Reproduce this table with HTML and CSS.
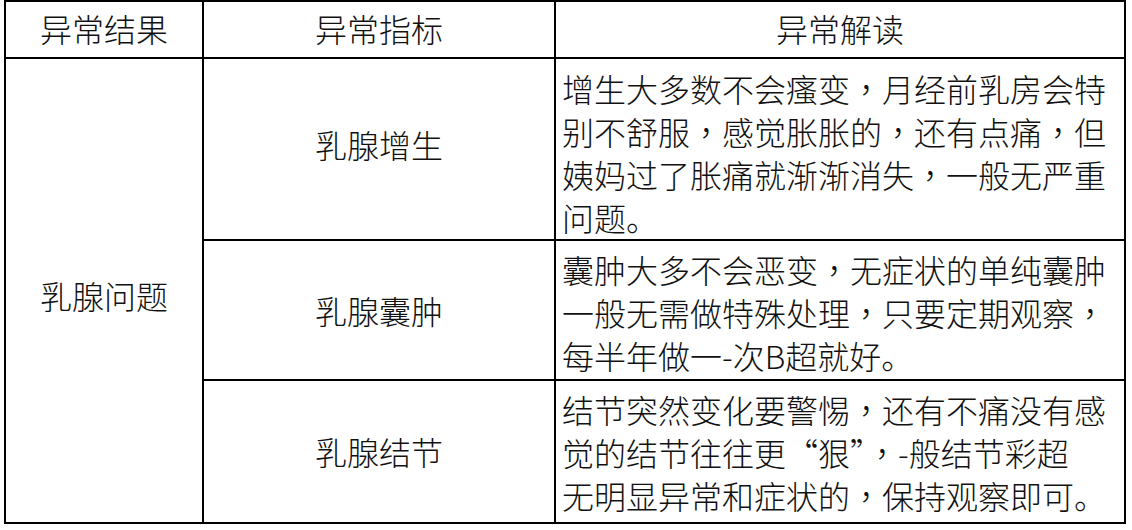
FILE: index.html
```html
<!DOCTYPE html>
<html lang="zh-CN">
<head>
<meta charset="utf-8">
<title>乳腺异常</title>
<link rel="stylesheet" href="styles.css">
</head>
<body>
<div class="sheet">
  <div class="cell head">异常结果</div>
  <div class="cell head">异常指标</div>
  <div class="cell head">异常解读</div>

  <div class="cell group">乳腺问题</div>

  <div class="cell name first">乳腺增生</div>
  <div class="cell note first"><p class="lines">增生大多数不会瘙变<span class="pc" lang="zh-TW">，</span>月经前乳房会特<br>别不舒服<span class="pc" lang="zh-TW">，</span>感觉胀胀的<span class="pc" lang="zh-TW">，</span>还有点痛<span class="pc" lang="zh-TW">，</span>但<br>姨妈过了胀痛就渐渐消失<span class="pc" lang="zh-TW">，</span>一般无严重<br>问题。</p></div>

  <div class="cell name">乳腺囊肿</div>
  <div class="cell note mid"><p class="lines">囊肿大多不会恶变<span class="pc" lang="zh-TW">，</span>无症状的单纯囊肿<br>一般无需做特殊处理<span class="pc" lang="zh-TW">，</span>只要定期观察<span class="pc" lang="zh-TW">，</span><br>每半年做一-次B超就好。</p></div>

  <div class="cell name">乳腺结节</div>
  <div class="cell note last"><p class="lines">结节突然变化要警惕<span class="pc" lang="zh-TW">，</span>还有不痛没有感<br>觉的结节往往更“狠”<span class="pc" lang="zh-TW">，</span>-般结节彩超<br>无明显异常和症状的<span class="pc" lang="zh-TW">，</span>保持观察即可。</p></div>
</div>
</body>
</html>
```

FILE: styles.css
```css
html, body {
  margin: 0;
  padding: 0;
  background: #ffffff;
}

body {
  font-family: "Noto Sans CJK SC", "Noto Sans", sans-serif;
  font-weight: 300;
  color: #111111;
}

.sheet {
  margin-left: 4px;
  width: 1122px;
  box-sizing: border-box;
  padding: 2px;
  background: #000000;
  display: grid;
  grid-template-columns: 196px 350px 568px;
  grid-template-rows: 55px 180px 138px 141px;
  gap: 2px;
}

.cell {
  background: #ffffff;
  font-size: 32px;
  line-height: 43px;
  display: flex;
  align-items: center;
  justify-content: center;
  white-space: nowrap;
  box-sizing: border-box;
}

.head {
  line-height: 1;
  padding-bottom: 3px;
}

.group {
  grid-row: 2 / span 3;
  grid-column: 1;
  padding-top: 10px;
}

.name {
  grid-column: 2;
}

.name.first {
  padding-bottom: 10px;
}

.note {
  grid-column: 3;
  justify-content: flex-start;
  padding: 0 6px;
}

.lines {
  margin: 0;
  text-align: left;
}

.note.first {
  padding-top: 8px;
}

.note.mid {
  padding-top: 4px;
}

.note.last {
  padding-top: 2px;
}

.pc {
  font-family: "Noto Sans CJK TC", "Noto Sans CJK SC", sans-serif;
}
```
